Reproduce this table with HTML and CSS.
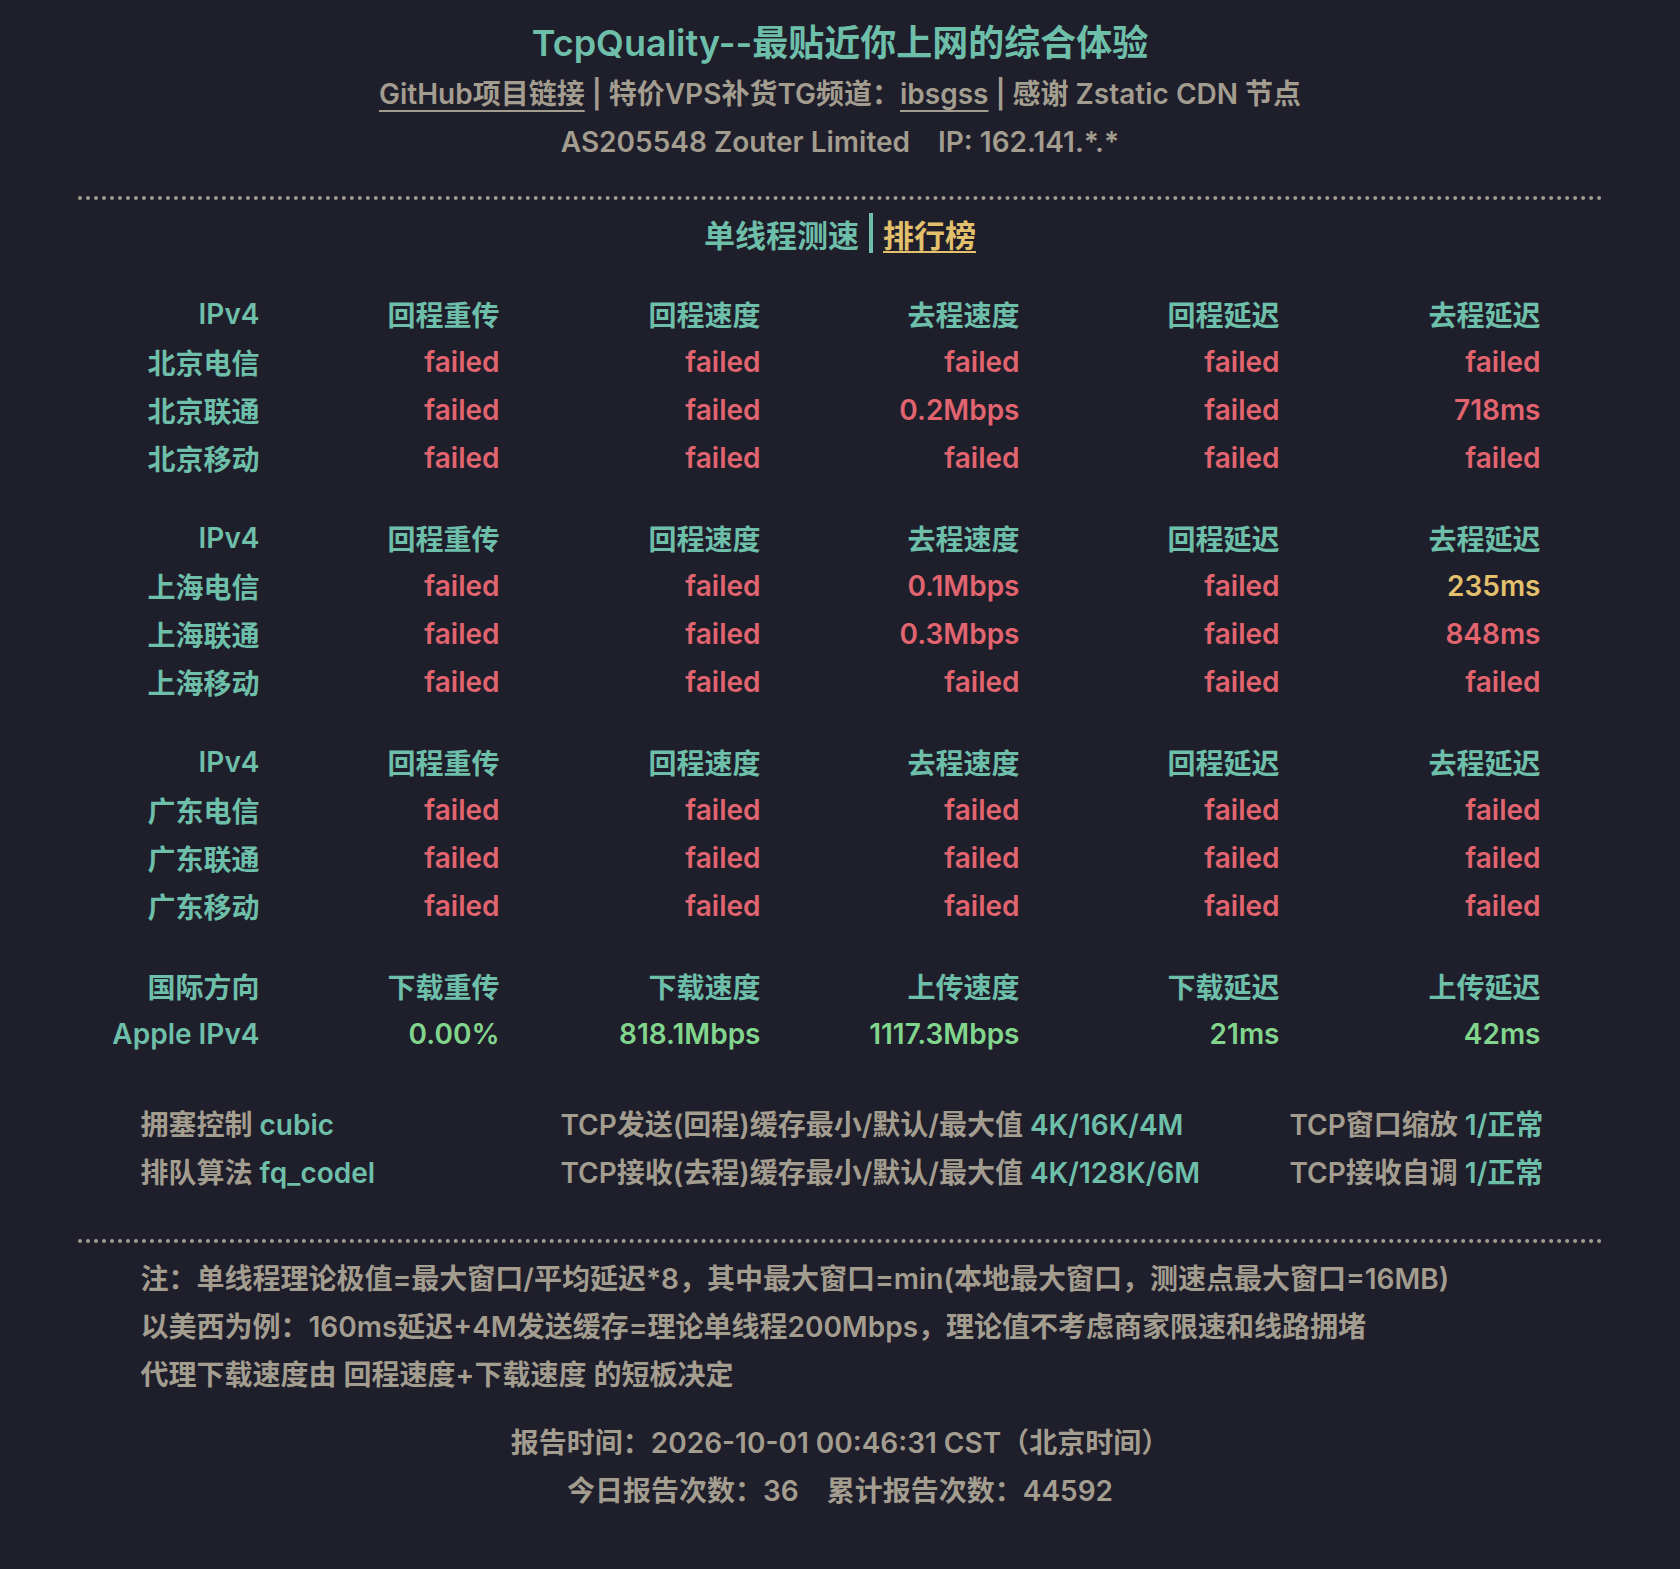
FILE: index.html
```html
<!DOCTYPE html>
<html lang="zh-CN">
<head>
<meta charset="utf-8">
<title>TcpQuality</title>
<link rel="stylesheet" href="styles.css">
</head>
<body>
<div class="page">
  <header class="head">
    <h1 class="title">TcpQuality--最贴近你上网的综合体验</h1>
    <p class="links"><a class="u" href="#">GitHub项目链接</a><span class="bar">|</span>特价VPS补货TG频道：<a class="u" href="#">ibsgss</a><span class="bar">|</span>感谢 Zstatic CDN 节点</p>
    <p class="asn">AS205548 Zouter Limited<span class="sp"></span>IP: 162.141.*.*</p>
  </header>
  <div class="dots"></div>
  <div class="sub"><span class="t">单线程测速</span><span class="vbar"></span><a class="rank" href="#">排行榜</a></div>

  <div class="grid">
    <div class="h">IPv4</div><div class="h">回程重传</div><div class="h">回程速度</div><div class="h">去程速度</div><div class="h">回程延迟</div><div class="h">去程延迟</div>
    <div class="h">北京电信</div><div class="r">failed</div><div class="r">failed</div><div class="r">failed</div><div class="r">failed</div><div class="r">failed</div>
    <div class="h">北京联通</div><div class="r">failed</div><div class="r">failed</div><div class="r">0.2Mbps</div><div class="r">failed</div><div class="r">718ms</div>
    <div class="h">北京移动</div><div class="r">failed</div><div class="r">failed</div><div class="r">failed</div><div class="r">failed</div><div class="r">failed</div>
  </div>

  <div class="grid">
    <div class="h">IPv4</div><div class="h">回程重传</div><div class="h">回程速度</div><div class="h">去程速度</div><div class="h">回程延迟</div><div class="h">去程延迟</div>
    <div class="h">上海电信</div><div class="r">failed</div><div class="r">failed</div><div class="r">0.1Mbps</div><div class="r">failed</div><div class="y">235ms</div>
    <div class="h">上海联通</div><div class="r">failed</div><div class="r">failed</div><div class="r">0.3Mbps</div><div class="r">failed</div><div class="r">848ms</div>
    <div class="h">上海移动</div><div class="r">failed</div><div class="r">failed</div><div class="r">failed</div><div class="r">failed</div><div class="r">failed</div>
  </div>

  <div class="grid">
    <div class="h">IPv4</div><div class="h">回程重传</div><div class="h">回程速度</div><div class="h">去程速度</div><div class="h">回程延迟</div><div class="h">去程延迟</div>
    <div class="h">广东电信</div><div class="r">failed</div><div class="r">failed</div><div class="r">failed</div><div class="r">failed</div><div class="r">failed</div>
    <div class="h">广东联通</div><div class="r">failed</div><div class="r">failed</div><div class="r">failed</div><div class="r">failed</div><div class="r">failed</div>
    <div class="h">广东移动</div><div class="r">failed</div><div class="r">failed</div><div class="r">failed</div><div class="r">failed</div><div class="r">failed</div>
  </div>

  <div class="grid">
    <div class="h">国际方向</div><div class="h">下载重传</div><div class="h">下载速度</div><div class="h">上传速度</div><div class="h">下载延迟</div><div class="h">上传延迟</div>
    <div class="h">Apple IPv4</div><div class="g">0.00%</div><div class="g">818.1Mbps</div><div class="g">1117.3Mbps</div><div class="g">21ms</div><div class="g">42ms</div>
  </div>

  <div class="cfg">
    <div>拥塞控制 <span class="v">cubic</span></div>
    <div>TCP发送(回程)缓存最小/默认/最大值 <span class="v">4K/16K/4M</span></div>
    <div>TCP窗口缩放 <span class="v">1/正常</span></div>
    <div>排队算法 <span class="v">fq_codel</span></div>
    <div>TCP接收(去程)缓存最小/默认/最大值 <span class="v">4K/128K/6M</span></div>
    <div>TCP接收自调 <span class="v">1/正常</span></div>
  </div>

  <div class="dots dots2"></div>

  <div class="notes">
    <p>注：单线程理论极值=最大窗口/平均延迟*8，其中最大窗口=min(本地最大窗口，测速点最大窗口=16MB)</p>
    <p>以美西为例：160ms延迟+4M发送缓存=理论单线程200Mbps，理论值不考虑商家限速和线路拥堵</p>
    <p>代理下载速度由 回程速度+下载速度 的短板决定</p>
  </div>

  <div class="foot">
    <p>报告时间：2026-10-01 00:46:31 CST（北京时间）</p>
    <p>今日报告次数：36<span class="sp"></span>累计报告次数：44592</p>
  </div>
</div>
</body>
</html>
```
FILE: styles.css
```css
html, body {
  margin: 0;
  padding: 0;
  background: #1f1e2b;
}
body {
  font-family: Inter, "Noto Sans CJK SC", "Noto Sans", sans-serif;
  font-weight: 600;
  font-size: 28px;
  color: #a39d8f;
  min-height: 1569px;
}
p { margin: 0; }
a { color: inherit; }

.page {
  width: 1525px;
  margin: 0 auto;
  padding-top: 16px;
}

.head { text-align: center; }
.title {
  margin: 0;
  font-size: 36px;
  font-weight: 600;
  line-height: 54px;
  color: #6ebfa9;
}
.links {
  line-height: 48px;
}
.links .u {
  text-decoration: underline;
  text-decoration-thickness: 2px;
  text-underline-offset: 6px;
}
.bar { margin: 0 7px; }
.asn { line-height: 48px; }
.sp { display: inline-block; width: 28px; }

.dots {
  margin-top: 30px;
  height: 0;
  border-top: 4px dotted #a39d8f;
}

.sub {
  display: flex;
  justify-content: center;
  align-items: center;
  margin-top: 9px;
  height: 48px;
  font-size: 31px;
  color: #6ebfa9;
}
.vbar {
  width: 4px;
  height: 40px;
  background: #6ebfa9;
  margin: 0 10px;
}
.rank {
  color: #e2c06c;
  text-decoration: underline;
  text-decoration-thickness: 2px;
  text-underline-offset: 4px;
}

.grid {
  display: grid;
  grid-template-columns: 182px 240px 261px 259px 260px 261px;
  grid-auto-rows: 48px;
  align-items: center;
  justify-items: end;
  margin-bottom: 32px;
}
.sub + .grid { margin-top: 33px; }
.h { color: #6ebfa9; }
.r { color: #e1646f; }
.y { color: #e2c06c; }
.g { color: #82d58c; }

.cfg {
  display: grid;
  grid-template-columns: 420px 729px auto;
  grid-auto-rows: 48px;
  align-items: center;
  margin-left: 63px;
  margin-top: 41px;
  white-space: nowrap;
}
.cfg .v { color: #6ebfa9; }

.dots2 { margin-top: 44px; }

.notes {
  margin-left: 63px;
  margin-top: 12px;
}
.notes p { line-height: 48px; }

.foot {
  text-align: center;
  margin-top: 20px;
}
.foot p { line-height: 48px; }
```
